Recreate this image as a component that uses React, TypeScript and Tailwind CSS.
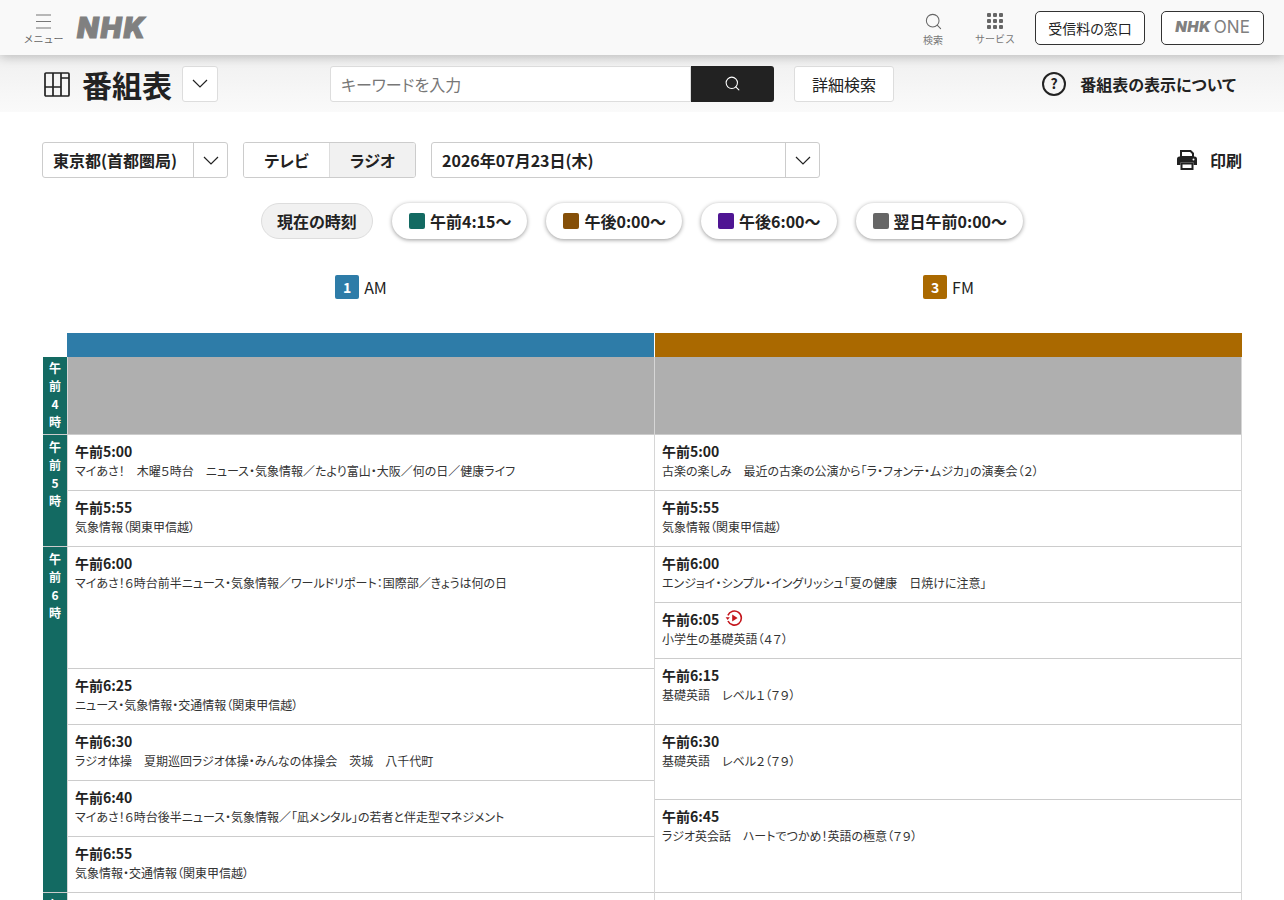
import { Search } from "lucide-react";

const FONT = "font-['Noto_Sans_CJK_JP','Noto_Sans',sans-serif] [font-feature-settings:'palt']";

interface Program {
	time: string;
	title: string;
	height: string;
	replay?: boolean;
}

const amPrograms: Program[] = [
	{ time: "午前5:00", title: "マイあさ！　木曜５時台　ニュース・気象情報／たより富山・大阪／何の日／健康ライフ", height: "h-[56px]" },
	{ time: "午前5:55", title: "気象情報（関東甲信越）", height: "h-[56px]" },
	{ time: "午前6:00", title: "マイあさ！６時台前半ニュース・気象情報／ワールドリポート：国際部／きょうは何の日", height: "h-[122px]" },
	{ time: "午前6:25", title: "ニュース・気象情報・交通情報（関東甲信越）", height: "h-[56px]" },
	{ time: "午前6:30", title: "ラジオ体操　夏期巡回ラジオ体操・みんなの体操会　茨城　八千代町", height: "h-[56px]" },
	{ time: "午前6:40", title: "マイあさ！６時台後半ニュース・気象情報／「凪メンタル」の若者と伴走型マネジメント", height: "h-[56px]" },
	{ time: "午前6:55", title: "気象情報・交通情報（関東甲信越）", height: "h-[56px]" },
];

const fmPrograms: Program[] = [
	{ time: "午前5:00", title: "古楽の楽しみ　最近の古楽の公演から「ラ・フォンテ・ムジカ」の演奏会（２）", height: "h-[56px]" },
	{ time: "午前5:55", title: "気象情報（関東甲信越）", height: "h-[56px]" },
	{ time: "午前6:00", title: "エンジョイ・シンプル・イングリッシュ「夏の健康　日焼けに注意」", height: "h-[56px]" },
	{ time: "午前6:05", title: "小学生の基礎英語（４７）", height: "h-[56px]", replay: true },
	{ time: "午前6:15", title: "基礎英語　レベル１（７９）", height: "h-[66px]" },
	{ time: "午前6:30", title: "基礎英語　レベル２（７９）", height: "h-[75px]" },
	{ time: "午前6:45", title: "ラジオ英会話　ハートでつかめ！英語の極意（７９）", height: "h-[93px]" },
];

const hours = [
	{ chars: ["午", "前", "4", "時"], height: "h-[78px] pt-[2px]" },
	{ chars: ["午", "前", "5", "時"], height: "h-[112px] pt-[3px]" },
	{ chars: ["午", "前", "6", "時"], height: "h-[346px] pt-[3px]" },
	{ chars: ["午", "前", "7", "時"], height: "h-[112px] pt-[3px]" },
];

const jumps = [
	{ label: "午前4:15〜", color: "bg-[#136a62]" },
	{ label: "午後0:00〜", color: "bg-[#854f08]" },
	{ label: "午後6:00〜", color: "bg-[#4f1593]" },
	{ label: "翌日午前0:00〜", color: "bg-[#666666]" },
];

const ReplayIcon = () => (
	<svg width="18" height="18" viewBox="0 0 18 18" fill="none" className="ml-[6px] -mt-[2px]">
		<path d="M2.900 6.400A7 7 0 1 1 3 12" stroke="#c4161c" strokeWidth="1.600" />
		<path d="M0.600 8.200h4.200L2.700 11z" fill="#c4161c" />
		<path d="M7.200 5.600l5.400 3.400-5.400 3.400z" fill="#c4161c" />
	</svg>
);

const TimetableIcon = () => (
	<svg width="26" height="26" viewBox="0 0 26 26" fill="none" stroke="#222" strokeWidth="1.700">
		<rect x="1" y="2" width="24" height="23" rx="1" />
		<path d="M9 2v23M17 2v23M1 16h16M17 7h8" />
	</svg>
);

const PrinterIcon = () => (
	<svg width="22" height="22" viewBox="0 0 22 22">
		<path d="M5 2h9.500L17 4.500V8H5z" fill="none" stroke="#222" strokeWidth="2" />
		<path d="M3.500 7.500h15A2.500 2.500 0 0 1 21 10v6h-3.500v-2.500h-13V16H1v-6a2.500 2.500 0 0 1 2.500-2.500z" fill="#222" />
		<path d="M5.500 14.500h11V20h-11z" fill="none" stroke="#222" strokeWidth="2" />
		<circle cx="17.500" cy="10.500" r="1" fill="#fff" />
	</svg>
);

const Chevron = () => (
	<svg width="16" height="9" viewBox="0 0 16 9" fill="none" stroke="#222" strokeWidth="1.200">
		<path d="M1 1l7 7 7-7" />
	</svg>
);

const ProgramCell = ({ item }: { item: Program }) => (
	<div className={`${item.height} border-b border-[#cccccc] pl-[7px] pt-[6px]`}>
		<div className="flex h-[20px] items-center text-[14px] font-bold leading-[20px] text-[#222]">
			{item.time}
			{item.replay && <ReplayIcon />}
		</div>
		<div className="mt-[1px] text-[12px] leading-[18px] text-[#333]">{item.title}</div>
	</div>
);

const App = () => {
	return (
		<div className={`${FONT} h-screen overflow-hidden bg-white text-[#222]`}>
			<header className="relative z-10 flex h-[55px] items-center justify-between bg-[#f9f9f9] pl-[24px] pr-[20px] shadow-[0_2px_10px_rgba(0,0,0,0.22)]">
				<div className="flex items-center">
					<div className="flex w-[39px] flex-col items-center pt-[5px]">
						<svg width="15" height="15" viewBox="0 0 15 15" stroke="#777" strokeWidth="1.200">
							<path d="M0 1h15M0 7.500h15M0 14h15" />
						</svg>
						<span className="mt-[3px] whitespace-nowrap text-[10px] leading-[14px] text-[#666] [font-feature-settings:normal]">メニュー</span>
					</div>
					<span className="ml-[14px] font-['Inter'] text-[28px] font-black italic leading-none tracking-[2px] text-[#808080] [-webkit-text-stroke:1px_#808080]">
						NHK
					</span>
				</div>
				<div className="flex items-center">
					<div className="flex w-[24px] flex-col items-center pt-[4px]">
						<Search size={19} strokeWidth={1.300} color="#666" />
						<span className="mt-[2px] whitespace-nowrap text-[10px] leading-[14px] text-[#777]">検索</span>
					</div>
					<div className="ml-[30px] flex w-[40px] flex-col items-center pt-[4px]">
						<div className="grid grid-cols-3 gap-[2px]">
							{Array.from({ length: 9 }).map((_, i) => (
								<span key={i} className="h-[4px] w-[4px] rounded-[1px] bg-[#666]" />
							))}
						</div>
						<span className="mt-[3px] whitespace-nowrap text-[10px] leading-[14px] text-[#777] [font-feature-settings:normal]">サービス</span>
					</div>
					<div className="ml-[20px] flex h-[34px] w-[110px] items-center justify-center rounded-[5px] border border-[#333] bg-white pt-px text-[14px] text-[#222]">
						受信料の窓口
					</div>
					<div className="ml-[16px] flex h-[34px] w-[103px] items-center justify-center rounded-[5px] border border-[#333] bg-white text-[#808080]">
						<span className="font-['Inter'] text-[15px] font-black italic tracking-[0.500px]">NHK</span>
						<span className="ml-[3px] font-['Inter'] text-[17px] font-normal">ONE</span>
					</div>
				</div>
			</header>

			<div className="flex h-[57px] items-center bg-gradient-to-b from-[#f0f0f0] to-[#fafafa] pl-[44px] pr-[48px]">
				<TimetableIcon />
				<h1 className="ml-[12px] text-[30px] font-bold leading-[40px] text-[#222]">番組表</h1>
				<div className="ml-[10px] flex h-[36px] w-[36px] items-center justify-center rounded-[3px] border border-[#ddd] bg-white">
					<Chevron />
				</div>
				<div className="ml-[112px] flex h-[36px] w-[444px]">
					<div className="flex h-full w-[361px] items-center rounded-l-[3px] border border-[#ddd] bg-white pl-[10px] text-[16px] text-[#777]">
						キーワードを入力
					</div>
					<div className="flex h-full flex-1 items-center justify-center rounded-r-[3px] bg-[#222]">
						<Search size={17} strokeWidth={1.500} color="#fff" />
					</div>
				</div>
				<div className="ml-[20px] flex h-[36px] w-[100px] items-center justify-center rounded-[3px] border border-[#ddd] bg-white text-[16px]">
					詳細検索
				</div>
				<div className="ml-auto flex items-center">
					<svg width="24" height="24" viewBox="0 0 24 24" fill="none">
						<circle cx="12" cy="12" r="11" stroke="#222" strokeWidth="2" />
						<text x="12" y="17" textAnchor="middle" fontSize="14" fontWeight="700" fill="#222">?</text>
					</svg>
					<span className="ml-[14px] text-[16px] font-bold">番組表の表示について</span>
				</div>
			</div>

			<main className="px-[42px] pt-[30px]">
				<div className="flex h-[36px] items-center">
					<div className="flex h-full w-[186px] items-center rounded-[3px] border border-[#ccc] bg-white pl-[10px] text-[16px] font-bold">
						<span className="flex-1">東京都(首都圏局)</span>
						<span className="flex h-[34px] w-[34px] items-center justify-center border-l border-[#ccc]">
							<Chevron />
						</span>
					</div>
					<div className="ml-[15px] flex h-full w-[173px] overflow-hidden rounded-[3px] border border-[#ccc] text-[16px] font-bold">
						<span className="flex w-[85px] items-center justify-center bg-white">テレビ</span>
						<span className="flex flex-1 items-center justify-center border-l border-[#ddd] bg-[#f1f1f1]">ラジオ</span>
					</div>
					<div className="ml-[15px] flex h-full w-[389px] items-center rounded-[3px] border border-[#ccc] bg-white pl-[10px] text-[16px] font-bold">
						<span className="flex-1">2026年07月23日(木)</span>
						<span className="flex h-[34px] w-[34px] items-center justify-center border-l border-[#ccc]">
							<Chevron />
						</span>
					</div>
					<div className="ml-auto flex items-center">
						<PrinterIcon />
						<span className="ml-[12px] text-[16px] font-bold">印刷</span>
					</div>
				</div>

				<div className="mt-[25px] flex h-[36px] items-center justify-center gap-[19px]">
					<div className="flex h-full w-[112px] items-center justify-center rounded-full border border-[#ddd] bg-[#f1f1f1] text-[16px] font-bold">
						現在の時刻
					</div>
					{jumps.map((jump) => (
						<div
							key={jump.label}
							className="flex h-full items-center rounded-full bg-white pl-[17px] pr-[16px] text-[16px] font-bold shadow-[0_1px_4px_rgba(0,0,0,0.4)]"
						>
							<span className={`${jump.color} mr-[5px] h-[16px] w-[16px] rounded-[2px]`} />
							{jump.label}
						</div>
					))}
				</div>

				<div className="ml-[25px] mt-[36px] flex h-[24px]">
					<div className="flex w-[588px] items-center justify-center">
						<span className="flex h-[24px] w-[24px] items-center justify-center rounded-[2px] bg-[#2e7ca8] text-[14px] font-bold text-white">1</span>
						<span className="ml-[5px] text-[16px]">AM</span>
					</div>
					<div className="flex w-[587px] items-center justify-center">
						<span className="flex h-[24px] w-[24px] items-center justify-center rounded-[2px] bg-[#aa6900] text-[14px] font-bold text-white">3</span>
						<span className="ml-[5px] text-[16px]">FM</span>
					</div>
				</div>

				<div className="ml-[25px] mt-[34px] flex h-[24px]">
					<div className="w-[588px] border-r border-white bg-[#2e7ca8]" />
					<div className="w-[587px] bg-[#aa6900]" />
				</div>

				<div className="flex pl-px">
					<div className="w-[24px] shrink-0">
						{hours.map((hour) => (
							<div
								key={hour.chars[2]}
								className={`${hour.height} flex flex-col items-center border-b border-[#cccccc] bg-[#136a62] text-[12px] font-bold leading-[18px] text-white`}
							>
								{hour.chars.map((c) => (
									<span key={c}>{c}</span>
								))}
							</div>
						))}
					</div>
					<div className="w-[588px] border-x border-[#d6d6d6]">
						<div className="h-[78px] border-b border-[#cccccc] bg-[#afafaf]" />
						{amPrograms.map((item) => (
							<ProgramCell key={item.time} item={item} />
						))}
						<div className="h-[60px]" />
					</div>
					<div className="w-[587px] border-r border-[#d6d6d6]">
						<div className="h-[78px] border-b border-[#cccccc] bg-[#afafaf]" />
						{fmPrograms.map((item) => (
							<ProgramCell key={item.time} item={item} />
						))}
						<div className="h-[60px]" />
					</div>
				</div>
			</main>
		</div>
	);
};

export default App;
